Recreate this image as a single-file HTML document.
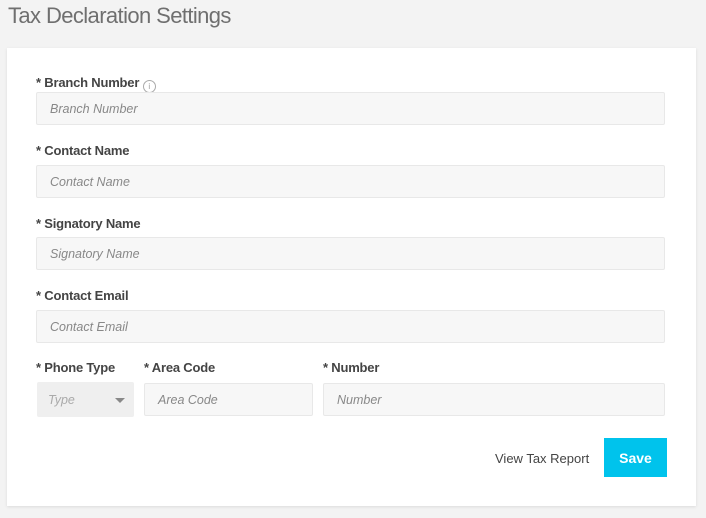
<!DOCTYPE html>
<html><head><style>
body{margin:0;width:706px;height:518px;background:#f3f3f3;font-family:"Liberation Sans",sans-serif;position:relative;overflow:hidden}
.t{position:absolute;left:8px;top:3px;font-size:22px;color:#6f6f6f;letter-spacing:-0.6px}
.card{position:absolute;left:7px;top:48px;width:689px;height:458px;background:#fff;box-shadow:0 1px 3px rgba(0,0,0,.1)}
.l{position:absolute;font-size:13px;font-weight:bold;color:#444;letter-spacing:-0.2px}
.i{position:absolute;background:#f7f7f7;border:1px solid #e8e8e8;border-radius:2px;box-sizing:border-box;font-size:12.5px;font-style:italic;color:#888;padding-left:13px;display:flex;align-items:center}
</style></head><body>
<div class="t">Tax Declaration Settings</div>
<div class="card"></div>
<div class="l" style="left:36px;top:75px">* Branch Number <span style="display:inline-block;width:11px;height:11px;border:1px solid #aaa;border-radius:50%;font-size:8px;color:#999;text-align:center;line-height:11px;font-weight:normal;vertical-align:-2px">i</span></div>
<div class="i" style="left:36px;top:92px;width:629px;height:33px">Branch Number</div>
<div class="l" style="left:36px;top:143px">* Contact Name</div>
<div class="i" style="left:36px;top:165px;width:629px;height:33px">Contact Name</div>
<div class="l" style="left:36px;top:216px">* Signatory Name</div>
<div class="i" style="left:36px;top:237px;width:629px;height:33px">Signatory Name</div>
<div class="l" style="left:36px;top:288px">* Contact Email</div>
<div class="i" style="left:36px;top:310px;width:629px;height:33px">Contact Email</div>
<div class="l" style="left:36px;top:360px">* Phone Type</div>
<div class="l" style="left:144px;top:360px">* Area Code</div>
<div class="l" style="left:323px;top:360px">* Number</div>
<div class="i" style="left:37px;top:382px;width:97px;height:35px;background:#efefef;border:none;padding-left:11px;color:#aaa">Type<span style="position:absolute;left:78px;top:16px;width:0;height:0;border-left:5px solid transparent;border-right:5px solid transparent;border-top:5px solid #888"></span></div>
<div class="i" style="left:144px;top:383px;width:169px;height:33px">Area Code</div>
<div class="i" style="left:323px;top:383px;width:342px;height:33px">Number</div>
<div style="position:absolute;left:495px;top:451px;font-size:13px;color:#444">View Tax Report</div>
<div style="position:absolute;left:604px;top:438px;width:63px;height:39px;background:#00c3ec;color:#fff;font-weight:bold;font-size:14px;display:flex;align-items:center;justify-content:center">Save</div>
</body></html>
